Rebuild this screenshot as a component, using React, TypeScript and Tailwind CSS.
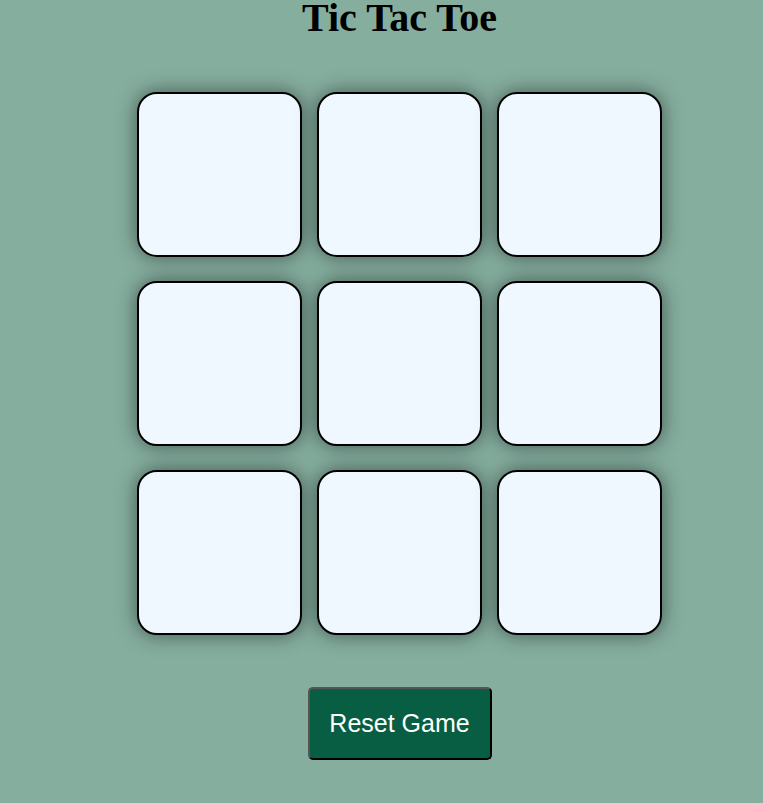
import { useState } from "react";

type Cell = "X" | "O" | "";

export default function App() {
  const [cells, setCells] = useState<Cell[]>(Array(9).fill(""));
  const [turn, setTurn] = useState<"X" | "O">("X");

  const play = (i: number) => {
    if (cells[i]) return;
    const next = [...cells];
    next[i] = turn;
    setCells(next);
    setTurn(turn === "X" ? "O" : "X");
  };

  const reset = () => {
    setCells(Array(9).fill(""));
    setTurn("X");
  };

  return (
    <div className="min-h-screen bg-[#85ae9f]">
      <main className="flex flex-col items-center pl-[36px] pb-[43px]">
        {/* Title */}
        <h1 className="m-0 text-[40px] leading-[36px] font-bold text-black font-['Liberation_Serif',serif]">
          Tic Tac Toe
        </h1>

        {/* Board */}
        <div className="mt-[56px] grid grid-cols-[repeat(3,165px)] gap-x-[15px] gap-y-[24px]">
          {cells.map((c, i) => (
            <button
              key={i}
              onClick={() => play(i)}
              className="h-[165px] w-[165px] rounded-[20px] border-2 border-black bg-[#f0f8ff] text-[80px] text-[#b0413e] font-['Liberation_Sans',sans-serif] shadow-[0_0_20px_rgba(0,0,0,0.5)]"
            >
              {c}
            </button>
          ))}
        </div>

        {/* Reset */}
        <button
          onClick={reset}
          className="mt-[52px] flex h-[73px] w-[184px] items-center justify-center rounded-[5px] border-2 border-t-[#555] border-l-[#555] border-b-black border-r-black bg-[#085e43] text-[25px] text-white font-['Liberation_Sans',sans-serif]"
        >
          Reset Game
        </button>
      </main>
    </div>
  );
}
